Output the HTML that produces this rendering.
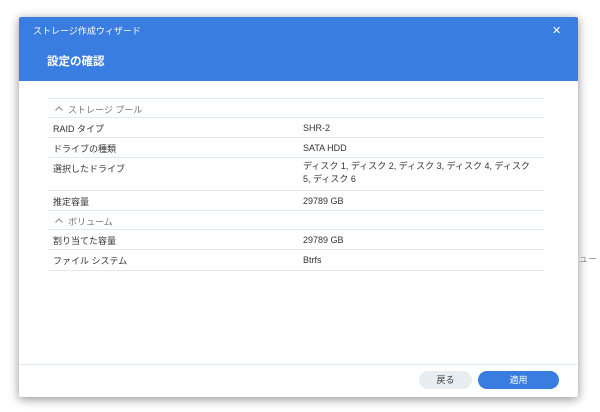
<!DOCTYPE html>
<html><head><meta charset="utf-8"><style>
body{margin:0;width:600px;height:412px;background:#fff;position:relative;overflow:hidden;font-family:"Liberation Sans","Noto Sans CJK JP",sans-serif;color:#333}
.bg{position:absolute;left:570px;top:252px;font-size:9px;color:#888}
.dlg{position:absolute;left:19px;top:17px;width:559px;height:380px;background:#fff;box-shadow:0 2px 10px rgba(0,0,0,.45);border-radius:2px}
.hd{position:absolute;left:0;top:0;width:559px;height:64px;background:#3a7de0;color:#fff;border-radius:2px 2px 0 0}
.t1{position:absolute;left:14px;top:7px;font-size:9px}
.t2{position:absolute;left:28px;top:36px;font-size:11.5px;font-weight:bold}
.x{position:absolute;left:533px;top:7px;font-size:11px}
.row{position:absolute;left:29px;width:496px;border-top:1px solid #e3e8ee;font-size:9px}
.row span{position:absolute;left:5px;top:4px}
.row b{position:absolute;left:255px;font-weight:normal;line-height:13px;top:2px}
.sec{color:#777}
.sec svg{position:absolute;left:7px;top:7px}
.sec span{left:20px}
.ft{position:absolute;left:0;top:347px;width:559px;border-top:1px solid #e3e8ee}
.btn{position:absolute;top:354px;height:18px;border-radius:9px;font-size:9px;text-align:center;line-height:18px}
</style></head><body>
<div class="bg">リュー</div>
<div class="dlg">
<div class="hd"><div class="t1">ストレージ作成ウィザード</div><div class="t2">設定の確認</div><div class="x">✕</div></div>
<div class="row sec" style="top:81px;height:19px"><svg width="8" height="5" viewBox="0 0 8 5"><path d="M0.5 4.5 L4 1 L7.5 4.5" fill="none" stroke="#888" stroke-width="1"/></svg><span>ストレージ プール</span></div>
<div class="row" style="top:100px;height:20px"><span>RAID タイプ</span><b style="top:4px">SHR-2</b></div>
<div class="row" style="top:120px;height:20px"><span>ドライブの種類</span><b style="top:4px">SATA HDD</b></div>
<div class="row" style="top:140px;height:33px"><span>選択したドライブ</span><b>ディスク 1, ディスク 2, ディスク 3, ディスク 4, ディスク<br>5, ディスク 6</b></div>
<div class="row" style="top:173px;height:20px"><span>推定容量</span><b style="top:4px">29789 GB</b></div>
<div class="row sec" style="top:193px;height:19px"><svg width="8" height="5" viewBox="0 0 8 5"><path d="M0.5 4.5 L4 1 L7.5 4.5" fill="none" stroke="#888" stroke-width="1"/></svg><span>ボリューム</span></div>
<div class="row" style="top:212px;height:20px"><span>割り当てた容量</span><b style="top:4px">29789 GB</b></div>
<div class="row" style="top:232px;height:20px;border-bottom:1px solid #e3e8ee"><span>ファイル システム</span><b style="top:4px">Btrfs</b></div>
<div class="ft"></div>
<div class="btn" style="left:400px;width:53px;background:#e8edf2;color:#333">戻る</div>
<div class="btn" style="left:459px;width:81px;background:#3a7de0;color:#fff">適用</div>
</div>
</body></html>
